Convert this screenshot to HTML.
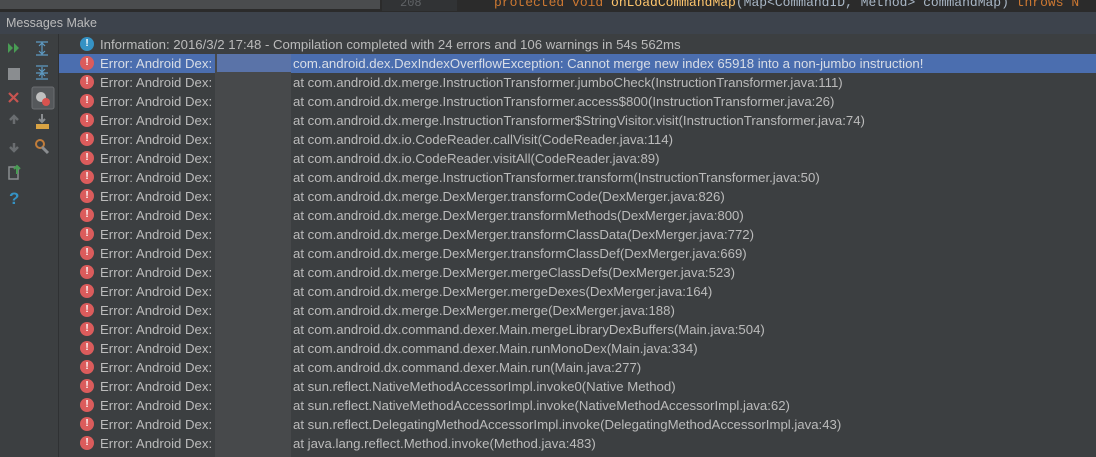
<!DOCTYPE html>
<html><head><style>
body{margin:0;width:1096px;height:457px;overflow:hidden;background:#3c3f41;font-family:"Liberation Sans",sans-serif;position:relative}
.top{position:absolute;left:0;top:0;width:1096px;height:11px;background:#2b2b2b}
.top .l{position:absolute;left:0;top:0;width:380px;height:9px;background:#4a4c4e}
.top .g{position:absolute;left:382px;top:0;width:75px;height:11px;background:#313335;color:#606366;font:12px "Liberation Mono",monospace;line-height:6px;padding-left:18px;box-sizing:border-box}
.code{position:absolute;left:494px;top:-5px;font:13px "Liberation Mono",monospace;color:#cc7832;white-space:pre}
.code span{color:#ffc66d}.code i{font-style:normal;color:#a9b7c6}
.hdr{position:absolute;left:0;top:11px;width:1096px;height:23px;background:#3d434c;color:#bbb;font-size:12.5px;line-height:23px;padding-left:6px;box-sizing:border-box;border-top:1px solid #2b2b2b}
.tb{position:absolute;left:0;top:34px;width:58px;height:423px;background:#3c3f41;border-right:1px solid #2f3133}
.list{position:absolute;left:59px;top:34px;right:0;bottom:0;background:#3c3f41}
.row{position:absolute;left:0;right:0;height:19px;color:#bbbbbb;font-size:13.2px;line-height:19px;white-space:nowrap}
.row.sel{background:#4b6eaf;color:#d8dde6}
.ic{position:absolute;left:21px;top:2px;width:14px;height:14px;border-radius:50%;background:#db5c5c;color:#fff;font-size:10px;font-weight:bold;line-height:14px;text-align:center}
.ic.i{background:#3592c4}
.t1{position:absolute;left:41px}
.t2{position:absolute;left:234px}
.blur{position:absolute;left:215px;top:54px;width:76px;height:403px;background:#47494b}
.blur2{position:absolute;left:217px;top:54px;width:74px;height:18px;background:#5a73a8}
</style></head><body>
<div class="top"><div class="l"></div><div class="g">208</div><div class="code">protected void <span>onLoadCommandMap</span><i>(Map&lt;CommandID, Method&gt; commandMap)</i> throws N</div></div>
<div class="hdr">Messages Make</div>
<div class="tb">
<svg width="58" height="180" style="position:absolute;left:0;top:0">
<polygon points="8,9 13,14 8,19" fill="#499c54"/><polygon points="14,9 19,14 14,19" fill="#499c54"/>
<rect x="8" y="34" width="12" height="12" fill="#8a8d90"/>
<path d="M9 59l9 9M18 59l-9 9" stroke="#c75450" stroke-width="2.2"/>
<path d="M14 90v-8M10 86l4-4 4 4" stroke="#6a6d70" stroke-width="2.5" fill="none"/>
<path d="M14 109v8M10 113l4 4 4-4" stroke="#6a6d70" stroke-width="2.5" fill="none"/>
<rect x="9" y="133" width="9" height="12" fill="none" stroke="#8a8d90" stroke-width="1.5"/><path d="M17 140v-8M14 135l3-3 3 3" stroke="#499c54" stroke-width="2" fill="none"/>
<text x="9" y="170" fill="#3592c4" font-size="17" font-weight="bold" font-family="Liberation Sans">?</text>
<path d="M36 8h12M36 21h12M42 10v9M39 12l3-3 3 3M39 17l3 3 3-3" stroke="#5e9bc4" stroke-width="1.2" fill="none"/>
<path d="M36 32h12M36 45h12M42 33v4M42 44v-4M39 35l3 3 3-3M39 42l3-3 3 3M36 39h12" stroke="#5e9bc4" stroke-width="1.2" fill="none"/>
<rect x="32" y="53" width="22" height="22" rx="2" fill="#55585b" stroke="#6b6e71"/><circle cx="41" cy="63" r="5" fill="#c0c0c0"/><circle cx="46" cy="68" r="4" fill="#d9534f"/>
<path d="M36 90h13v5h-13z" fill="#d9a343"/><path d="M42 80v8M39 85l3 3 3-3" stroke="#8a8d90" stroke-width="2" fill="none"/>
<circle cx="40" cy="110" r="4" fill="none" stroke="#c27d3a" stroke-width="2"/><path d="M42 113l6 6" stroke="#8a8d90" stroke-width="3"/>
</svg></div>
<div class="list">
<div class="row" style="top:1px"><div class="ic i">!</div><span class="t1">Information: 2016/3/2 17:48 - Compilation completed with 24 errors and 106 warnings in 54s 562ms</span></div>
<div class="row sel" style="top:20px"><div class="ic">!</div><span class="t1">Error: Android Dex:</span><span class="t2">com.android.dex.DexIndexOverflowException: Cannot merge new index 65918 into a non-jumbo instruction!</span></div>
</div>
<div class="blur"></div><div class="blur2"></div>
<div class="list" style="background:none" id="rows"></div>
<script>
var t=["at com.android.dx.merge.InstructionTransformer.jumboCheck(InstructionTransformer.java:111)","at com.android.dx.merge.InstructionTransformer.access$800(InstructionTransformer.java:26)","at com.android.dx.merge.InstructionTransformer$StringVisitor.visit(InstructionTransformer.java:74)","at com.android.dx.io.CodeReader.callVisit(CodeReader.java:114)","at com.android.dx.io.CodeReader.visitAll(CodeReader.java:89)","at com.android.dx.merge.InstructionTransformer.transform(InstructionTransformer.java:50)","at com.android.dx.merge.DexMerger.transformCode(DexMerger.java:826)","at com.android.dx.merge.DexMerger.transformMethods(DexMerger.java:800)","at com.android.dx.merge.DexMerger.transformClassData(DexMerger.java:772)","at com.android.dx.merge.DexMerger.transformClassDef(DexMerger.java:669)","at com.android.dx.merge.DexMerger.mergeClassDefs(DexMerger.java:523)","at com.android.dx.merge.DexMerger.mergeDexes(DexMerger.java:164)","at com.android.dx.merge.DexMerger.merge(DexMerger.java:188)","at com.android.dx.command.dexer.Main.mergeLibraryDexBuffers(Main.java:504)","at com.android.dx.command.dexer.Main.runMonoDex(Main.java:334)","at com.android.dx.command.dexer.Main.run(Main.java:277)","at sun.reflect.NativeMethodAccessorImpl.invoke0(Native Method)","at sun.reflect.NativeMethodAccessorImpl.invoke(NativeMethodAccessorImpl.java:62)","at sun.reflect.DelegatingMethodAccessorImpl.invoke(DelegatingMethodAccessorImpl.java:43)","at java.lang.reflect.Method.invoke(Method.java:483)"];
var h="";for(var i=0;i<t.length;i++){h+='<div class="row" style="top:'+(39+19*i)+'px"><div class="ic">!</div><span class="t1">Error: Android Dex:</span><span class="t2">'+t[i]+'</span></div>';}
document.getElementById("rows").innerHTML=h;
</script>
</body></html>
